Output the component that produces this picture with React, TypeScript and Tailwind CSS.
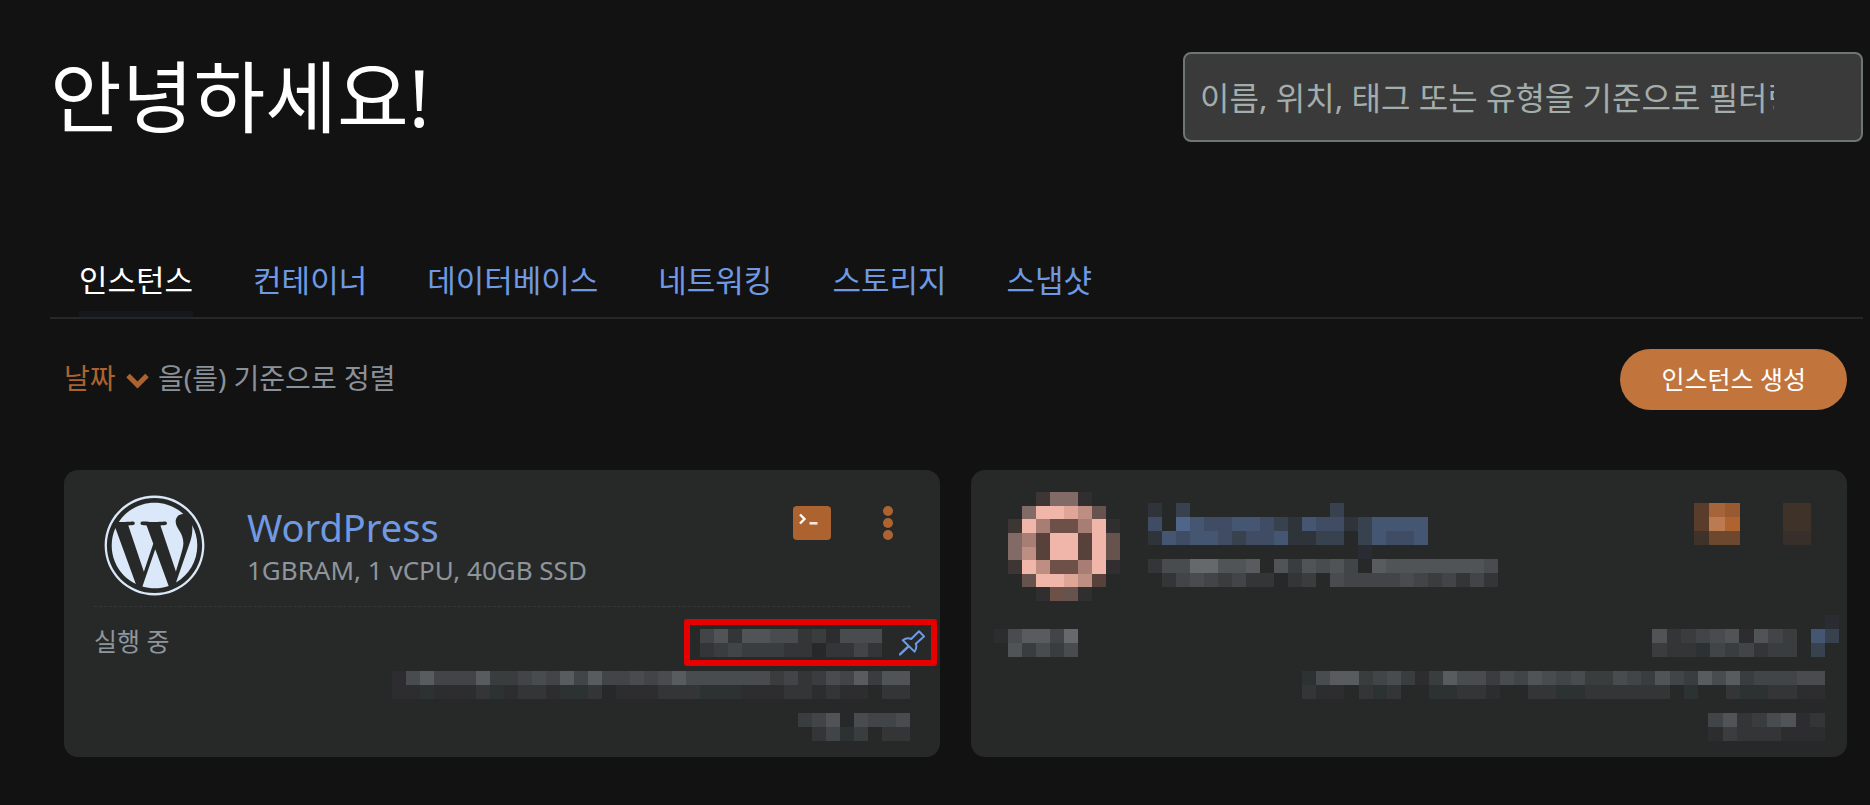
import { FaWordpress } from "react-icons/fa";

const TABS = ["인스턴스", "컨테이너", "데이터베이스", "네트워킹", "스토리지", "스냅샷"];

// one character per mosaic cell, "." is left empty
const TONES: Record<string, string> = {
  a: "#2d2d2f",
  b: "#343537",
  c: "#3a3d3d",
  d: "#424547",
  e: "#494c4f",
  f: "#505457",
  g: "#595c5f",
  h: "#66696c",
  k: "#2c3132",
  "0": "#292d33",
  "1": "#2e343a",
  "2": "#38424f",
  "3": "#3f4c63",
  "4": "#455673",
  "5": "#4f6589",
  P: "#f0b6aa",
  Q: "#dfa698",
  R: "#be8e83",
  S: "#a87d73",
  T: "#826a66",
  U: "#67534e",
  V: "#6d5047",
  W: "#58413a",
  X: "#3e3635",
  Y: "#302e2e",
  A: "#bb7a50",
  B: "#af6430",
  C: "#a5643a",
  D: "#9a5a30",
  E: "#6d472e",
  F: "#593d2a",
  G: "#3f3229",
  H: "#382f2b",
};

const Mosaic: React.FC<{
  rows: string[];
  width?: number;
  height?: number;
}> = ({ rows, width, height }) => {
  const cols = rows[0].length;
  return (
    <svg
      width={width || cols * 14}
      height={height || rows.length * 14}
      viewBox={`0 0 ${cols} ${rows.length}`}
      preserveAspectRatio="none"
      shapeRendering="crispEdges"
      className="block shrink-0"
      aria-hidden="true"
    >
      {rows.map((row, y) =>
        row.split("").map((tone, x) =>
          tone === "." ? null : (
            <rect key={`${x}-${y}`} x={x} y={y} width={1} height={1} fill={TONES[tone]} />
          )
        )
      )}
    </svg>
  );
};

const TerminalIcon = () => (
  <svg width="38" height="34" viewBox="0 0 38 34" aria-hidden="true">
    <rect width="38" height="34" rx="4" fill="#ad6330" />
    <path d="M7 8.5 11.5 13 7 17.5" fill="none" stroke="#fff" strokeWidth="2.4" />
    <path d="M16.5 17.3h8" stroke="#f4e8e0" strokeWidth="2.6" />
  </svg>
);

const MoreIcon = () => (
  <svg width="10" height="34" viewBox="0 0 10 34" fill="#ad6330" aria-hidden="true">
    <circle cx="5" cy="5" r="5" />
    <circle cx="5" cy="17" r="5" />
    <circle cx="5" cy="29" r="5" />
  </svg>
);

const PinIcon = () => (
  <svg
    width="26"
    height="26"
    viewBox="0 0 26 26"
    fill="none"
    stroke="#6f9ae3"
    strokeWidth="2"
    strokeLinejoin="round"
    strokeLinecap="round"
    aria-hidden="true"
  >
    <path d="M20 1.2 25 6.4 16.8 13.8Q18.4 17.6 15.5 21.6L3.8 10.2Q8 7.2 12.2 9Z" />
    <path d="M9 16.8 1 24.4" strokeWidth="2.4" />
  </svg>
);

const WordPressCard = () => (
  <article className="rounded-[14px] bg-[#272928] pb-4">
    <div className="mx-[30px] flex h-[137px] items-start border-b border-dashed border-[#343736] pt-6 pl-[9px]">
      <FaWordpress className="size-[103px] shrink-0 text-[#dbe8f9]" aria-hidden="true" />
      <div className="mt-[9px] ml-[41px] grow">
        <h2 className="text-[38px] leading-[48px] text-[#6f9ae3]">
          <a href="#wordpress">WordPress</a>
        </h2>
        <p className="text-[26px] leading-[38px] text-[#8f959c]">1GBRAM, 1 vCPU, 40GB SSD</p>
      </div>
      <div className="mt-3 mr-[17px] flex gap-[52px]">
        <button type="button" aria-label="터미널 연결">
          <TerminalIcon />
        </button>
        <button type="button" aria-label="더 보기">
          <MoreIcon />
        </button>
      </div>
    </div>
    <div className="mt-[22px] flex h-7 items-center justify-between pr-[15px] pl-[30px]">
      <span className="pb-0.5 text-[25px] text-[#8f959c]">실행 중</span>
      <div className="relative flex items-center gap-[17px]">
        <Mosaic rows={["dfbffeebcaeee", "bcdcccbb.bbdb"]} />
        <button type="button" aria-label="고정 IP">
          <PinIcon />
        </button>
        <div className="pointer-events-none absolute -top-[10px] -right-3 -bottom-[9px] -left-4 rounded-[3px] border-6 border-[#e60000]" />
      </div>
    </div>
    <div className="mt-[14px] flex flex-col items-end gap-[14px] pr-[30px]">
      <Mosaic
        rows={[
          "aegdddgccdedgdgddedegeeeeeecdbcedgcff",
          "aakaaabkabbakkb.aaabbbkkkaaabbabaa.bb",
        ]}
      />
      <Mosaic rows={["cdf.edde", ".bdkc.bb"]} />
    </div>
  </article>
);

const RedactedCard = () => (
  <article className="rounded-[14px] bg-[#272928] pb-4">
    <div className="flex h-[137px] items-start pt-[22px] pr-9 pl-[37px]">
      <Mosaic
        height={109}
        rows={[
          "..XTTY..",
          ".TPPQRU.",
          "XPSVVSPY",
          "TSWPPWPU",
          "TRWPPWPU",
          "XPRVVSPY",
          ".UPPQRW.",
          "..YVUY..",
        ]}
      />
      <div className="mt-[11px] ml-7 grow">
        <Mosaic
          rows={[
            "1.2..........2......",
            "3.543344321433124444",
            "14344323341122.24334",
            "...............0....",
          ]}
        />
        <Mosaic rows={["beehhffg.fcfefd.gfffffffe", ".bdedcdbb.bc.eddddedcdbdb"]} />
      </div>
      <div className="mt-[11px] flex gap-[43px]">
        <Mosaic rows={["FCD", "FAB", "GEE"]} width={46} />
        <Mosaic rows={["GG", "GG", "HH"]} />
      </div>
    </div>
    <div className="mt-2 flex h-[42px] items-end justify-between pr-2 pl-[23px]">
      <Mosaic rows={["aeggdh", ".fcece"]} />
      <div className="flex items-end gap-[14px]">
        <Mosaic rows={["fbcdefafdc", "cbbkdcdbcc"]} width={145} />
        <Mosaic rows={[".0", "42", "2."]} />
      </div>
    </div>
    <div className="mt-[14px] flex flex-col items-end gap-[14px] pr-[22px]">
      <Mosaic
        width={523}
        rows={[
          "keggcdecacgeecedfedeccedcfdcgegcdddee",
          "baa.bkb..kkbba..bbkkbbbbbb.k..bkkbbaa",
        ]}
      />
      <Mosaic rows={["dfbcefab", "acbbbaaa"]} width={117} />
    </div>
  </article>
);

const App: React.FC = () => {
  return (
    <main className="min-h-screen bg-[#121212] pt-[52px] pr-[7px] pb-12 pl-[50px] font-['Noto_Sans','Noto_Sans_CJK_KR',sans-serif]">
      <header className="flex items-center justify-between">
        <h1 className="text-[78px] leading-[90px] text-white">안녕하세요!</h1>
        <input
          type="text"
          aria-label="인스턴스 필터"
          placeholder="이름, 위치, 태그 또는 유형을 기준으로 필터링"
          className="h-[90px] w-[680px] rounded-lg border-2 border-[#6d7675] bg-[#3a3a3a] pr-[87px] pl-[15px] text-[32px] text-white placeholder:text-[#a3adac]"
        />
      </header>

      <nav className="mt-[118px] flex gap-[60px] border-b-2 border-[#262727] pl-[29px] text-[31px] leading-10">
        {TABS.map((tab, i) => (
          <a
            key={tab}
            href={`#tab-${i}`}
            aria-current={i === 0 ? "page" : undefined}
            className={
              i === 0
                ? "border-b-6 border-[#17181d] pb-[11px] text-white"
                : "border-b-6 border-transparent pb-[11px] text-[#6f9ae3]"
            }
          >
            {tab}
          </a>
        ))}
      </nav>

      <div className="mt-[30px] flex items-center justify-between pr-4 pl-[14px]">
        <div className="flex items-center pb-[3px] text-[28px] leading-10">
          <div className="relative">
            <select
              id="sort"
              className="block appearance-none bg-transparent pr-[42px] text-[#ad6330]"
            >
              <option>날짜</option>
            </select>
            <svg
              width="23"
              height="16"
              viewBox="0 0 23 16"
              className="pointer-events-none absolute top-[15px] right-[9px]"
              aria-hidden="true"
            >
              <path d="M2 2.5 11.5 12 21 2.5" fill="none" stroke="#ad6330" strokeWidth="5" />
            </svg>
          </div>
          <label htmlFor="sort" className="text-[#8b9198]">
            을(를) 기준으로 정렬
          </label>
        </div>
        <button
          type="button"
          className="h-[61px] rounded-full bg-[#c1753d] px-[41px] text-[25px] text-white"
        >
          인스턴스 생성
        </button>
      </div>

      <section className="mt-[60px] grid grid-cols-2 gap-[31px] pr-4 pl-[14px]">
        <WordPressCard />
        <RedactedCard />
      </section>
    </main>
  );
};

export default App;
